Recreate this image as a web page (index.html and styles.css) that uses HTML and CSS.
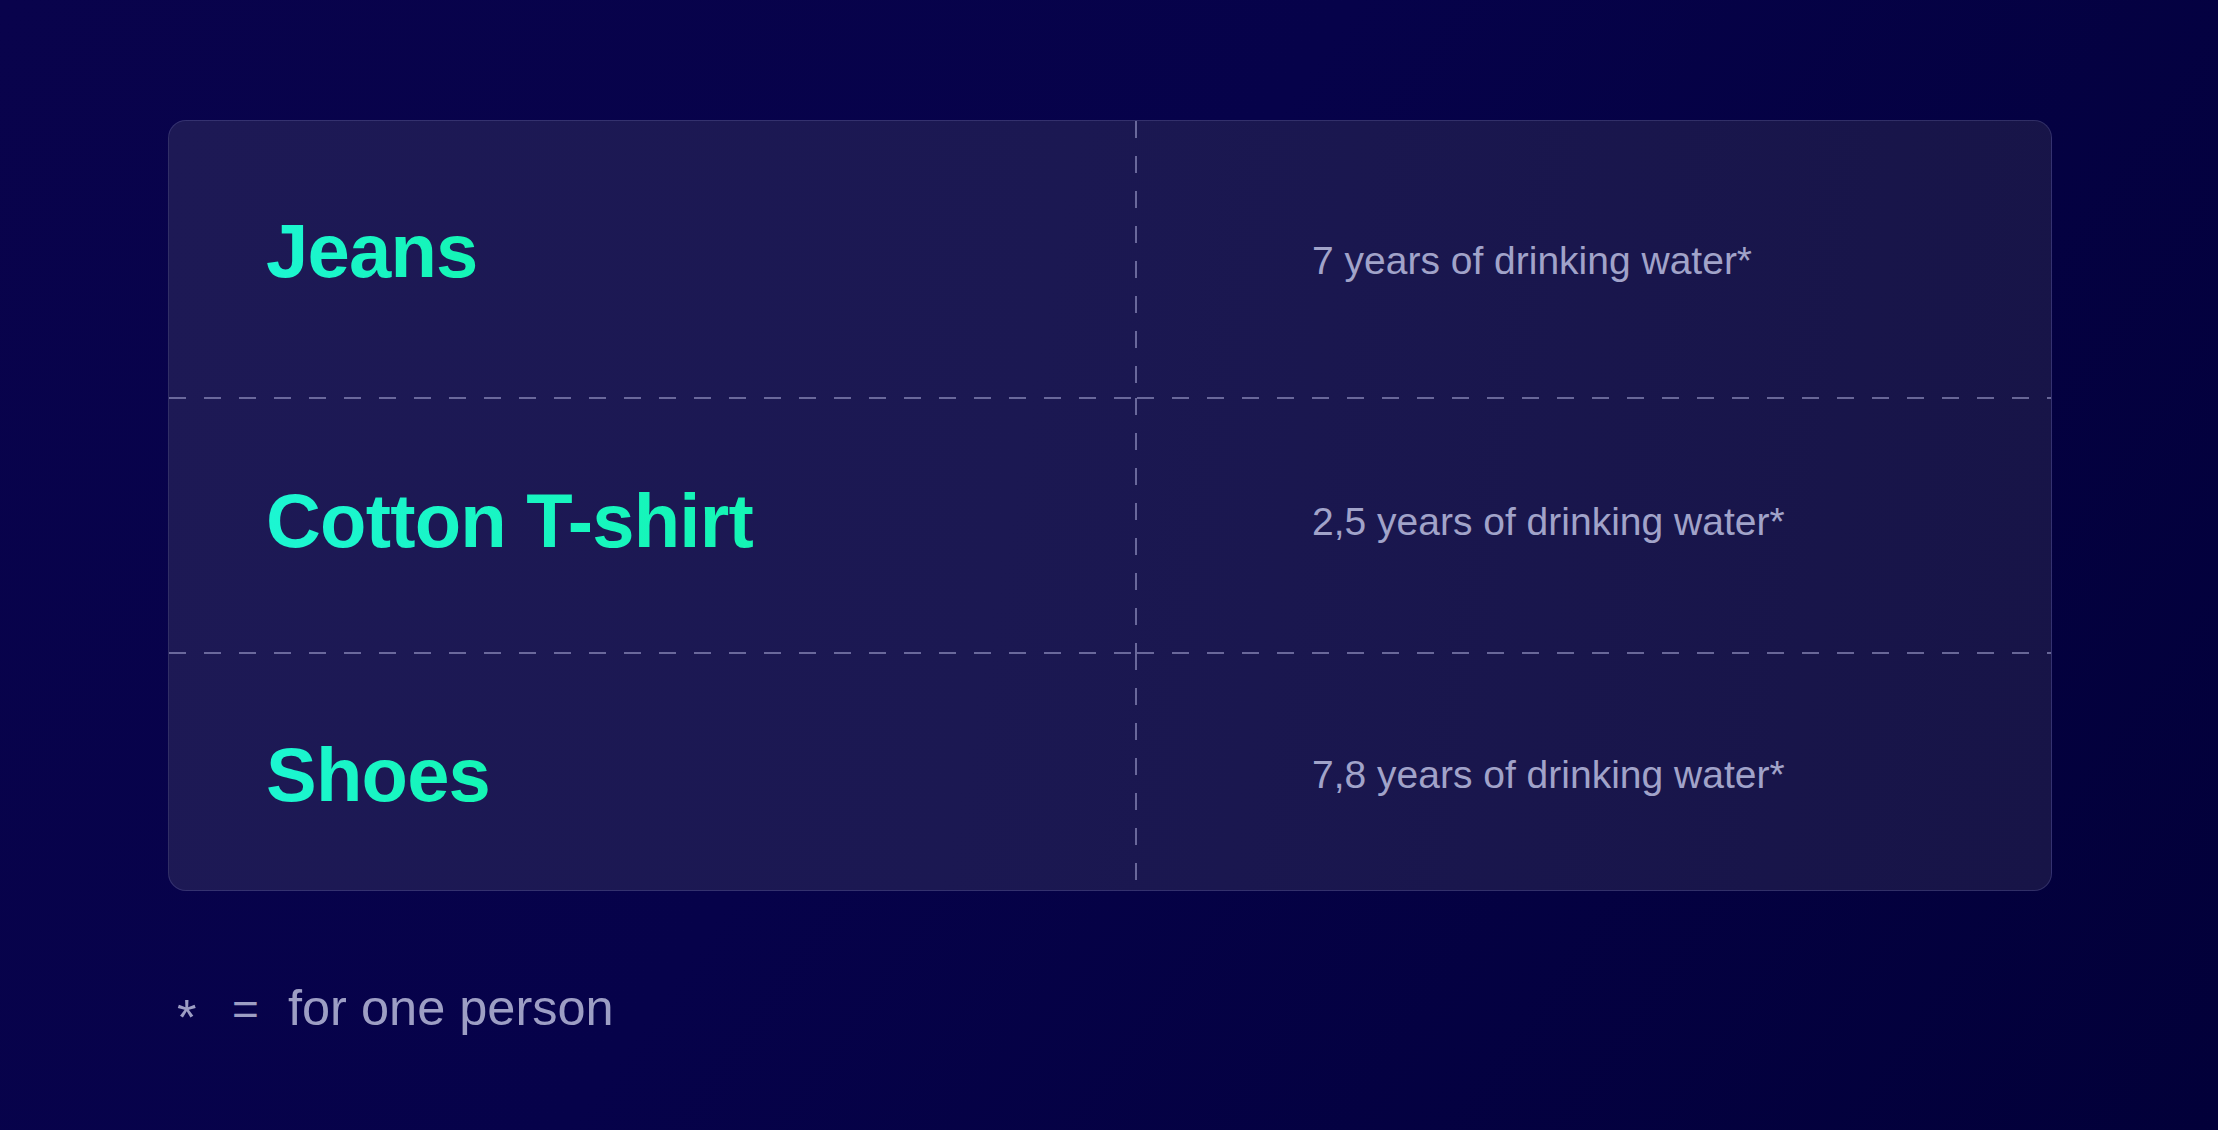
FILE: index.html
```html
<!DOCTYPE html>
<html lang="en">
<head>
<meta charset="utf-8">
<title>Water footprint</title>
<link rel="stylesheet" href="styles.css">
</head>
<body>
<main class="page">
  <section class="card">
    <div class="row row-1">
      <div class="cell cell-name"><h2 class="name">Jeans</h2></div>
      <div class="cell cell-value"><p class="value">7 years of drinking water*</p></div>
    </div>
    <div class="row row-2">
      <div class="cell cell-name"><h2 class="name">Cotton T-shirt</h2></div>
      <div class="cell cell-value"><p class="value">2,5 years of drinking water*</p></div>
    </div>
    <div class="row row-3">
      <div class="cell cell-name"><h2 class="name">Shoes</h2></div>
      <div class="cell cell-value"><p class="value">7,8 years of drinking water*</p></div>
    </div>
  </section>
  <p class="note"><span class="note-star">*</span><span class="note-eq">=</span><span class="note-text">for one person</span></p>
</main>
</body>
</html>
```

FILE: styles.css
```css
html, body {
  margin: 0;
  padding: 0;
}

body {
  width: 2218px;
  height: 1130px;
  overflow: hidden;
  background: linear-gradient(125deg, #09034c 0%, #06024a 45%, #020039 100%);
  font-family: "Liberation Sans", Arial, sans-serif;
}

.page {
  padding: 120px 166px 0 168px;
  display: flex;
  flex-direction: column;
}

.card {
  width: 1884px;
  box-sizing: border-box;
  border: 1.5px solid rgba(140, 140, 210, 0.22);
  border-radius: 18px;
  background: linear-gradient(100deg, #1d1955 0%, #1b1852 45%, #171447 100%);
  display: grid;
  grid-template-columns: 968px 1fr;
  grid-template-rows: 277px 255px 237px;
  overflow: hidden;
}

.row {
  display: contents;
}

.cell {
  display: flex;
  align-items: center;
  box-sizing: border-box;
}

.cell-name {
  padding-left: 97px;
  background-image: linear-gradient(to bottom, rgba(170, 170, 215, 0.55) 50%, transparent 50%);
  background-size: 2px 35px;
  background-repeat: repeat-y;
  background-position: right top;
}

.cell-value {
  padding-left: 175px;
}

.row-1 .cell,
.row-2 .cell {
  position: relative;
}

.row-1 .cell::after,
.row-2 .cell::after {
  content: "";
  position: absolute;
  left: 0;
  right: 0;
  bottom: -1px;
  height: 2px;
  background-image: linear-gradient(to right, rgba(170, 170, 215, 0.55) 50%, transparent 50%);
  background-size: 35px 2px;
  background-repeat: repeat-x;
}

.name {
  margin: 0;
  font-size: 76px;
  font-weight: 700;
  letter-spacing: -0.8px;
  line-height: 1;
  color: #18f5c6;
  background: linear-gradient(90deg, #1cf6d2 0%, #14f5b4 100%);
  -webkit-background-clip: text;
  background-clip: text;
  -webkit-text-fill-color: transparent;
}

.row-1 .name { margin-top: -18px; }
.row-2 .name { margin-top: -10px; }
.row-3 .name { margin-top: 7px; }

.value {
  margin: 0;
  font-size: 39px;
  line-height: 1;
  letter-spacing: 0;
  color: #a1a3c9;
}

.row-1 .value { margin-top: 2px; }
.row-2 .value { margin-top: -8px; }
.row-3 .value { margin-top: 6px; }

.note {
  margin: 92px 0 0 9px;
  display: flex;
  align-items: baseline;
  color: #9d9ec4;
  font-size: 50.5px;
  line-height: 1;
}

.note-star {
  font-size: 50px;
  position: relative;
  top: 10px;
  width: 55px;
}

.note-eq {
  width: 56px;
  font-size: 46px;
}

.note-text {
  letter-spacing: 0;
}
```
